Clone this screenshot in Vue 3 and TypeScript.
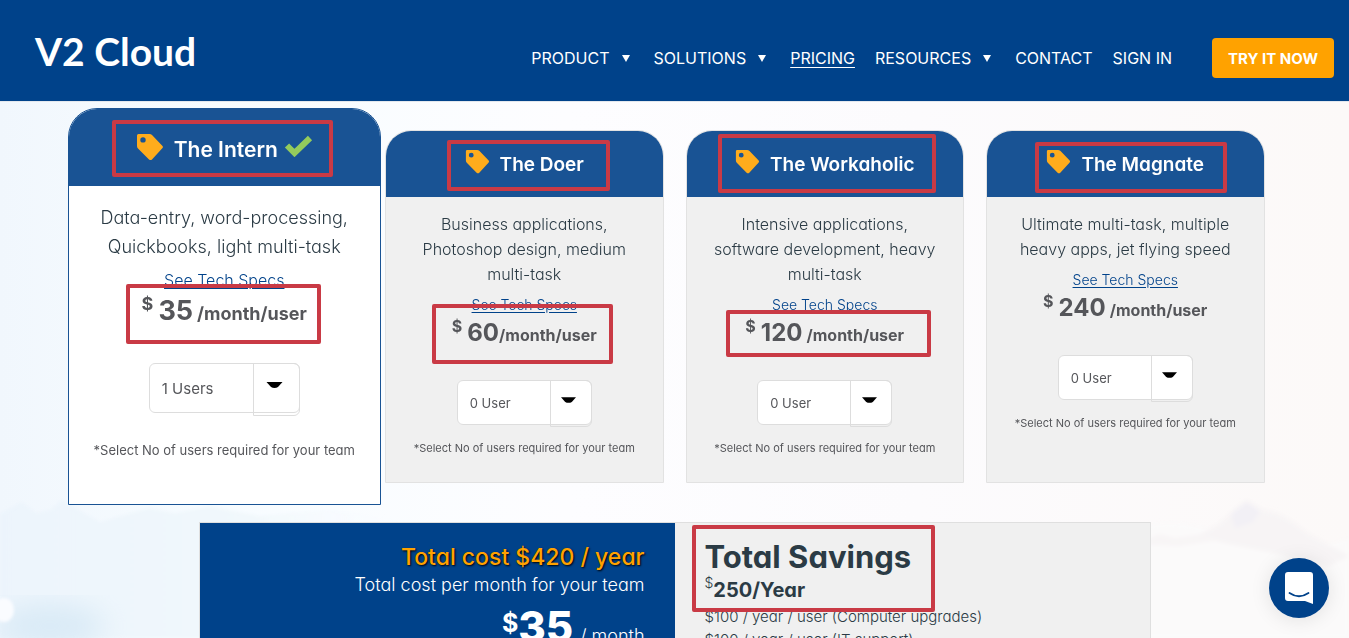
<script setup lang="ts">
import { ref } from 'vue'

interface Plan {
  id: string
  name: string
  description: string
  price: number
  users: string
  featured?: boolean
  markPrice?: boolean
}

const plans = ref<Plan[]>([
  { id: 'intern', name: 'The Intern', description: 'Data-entry, word-processing, Quickbooks, light multi-task', price: 35, users: '1 Users', featured: true, markPrice: true },
  { id: 'doer', name: 'The Doer', description: 'Business applications, Photoshop design, medium multi-task', price: 60, users: '0 User', markPrice: true },
  { id: 'workaholic', name: 'The Workaholic', description: 'Intensive applications, software development, heavy multi-task', price: 120, users: '0 User', markPrice: true },
  { id: 'magnate', name: 'The Magnate', description: 'Ultimate multi-task, multiple heavy apps, jet flying speed', price: 240, users: '0 User' },
])

const links = [
  { label: 'PRODUCT', menu: true },
  { label: 'SOLUTIONS', menu: true },
  { label: 'PRICING', current: true },
  { label: 'RESOURCES', menu: true },
  { label: 'CONTACT' },
  { label: 'SIGN IN' },
]

const userOptions = ['0 User', '1 Users', '2 Users', '3 Users', '4 Users', '5 Users']
</script>

<template>
  <div class="page">
    <svg class="scenery left" viewBox="0 0 420 240" aria-hidden="true">
      <defs>
        <filter id="mist" x="-20%" y="-20%" width="140%" height="140%"><feGaussianBlur stdDeviation="14" /></filter>
        <filter id="soft"><feGaussianBlur stdDeviation="1.500" /></filter>
        <linearGradient id="ridge" x1="0" y1="0" x2="1" y2="0">
          <stop offset="0" stop-color="#ecf4fc" />
          <stop offset="0.6" stop-color="#f1f8fc" />
          <stop offset="1" stop-color="#fbfcff" stop-opacity="0" />
        </linearGradient>
      </defs>
      <path d="M0 116L22 104L36 115L50 112L62 102L80 113L100 124L120 118L150 110L175 115L210 108L260 118L330 112L420 124V240H0Z" fill="url(#ridge)" filter="url(#soft)" />
      <ellipse cx="50" cy="228" rx="55" ry="22" fill="#d9eaf6" filter="url(#mist)" />
      <ellipse cx="4" cy="212" rx="10" ry="12" fill="#fafcff" filter="url(#soft)" />
    </svg>
    <svg class="scenery right" viewBox="0 0 420 240" aria-hidden="true">
      <defs>
        <filter id="haze"><feGaussianBlur stdDeviation="2" /></filter>
      </defs>
      <g filter="url(#haze)">
        <path d="M0 160Q60 130 110 142T200 134T300 138T420 140V240H0Z" fill="#fbfafa" />
        <path d="M268 138L290 126L305 112L318 102L332 111L348 115L364 124L380 136L420 158L400 168L350 156L300 146Z" fill="#f7f4f5" />
        <path d="M302 116L317 104L331 113L324 124L306 130Z" fill="#f2f0f5" />
        <path d="M210 146L230 136L246 140L275 136L290 142L250 148Z" fill="#f8f5f6" />
      </g>
    </svg>

    <header class="topbar">
      <a class="logo" href="#">V2 Cloud</a>
      <nav class="nav" aria-label="Main">
        <a v-for="link in links" :key="link.label" href="#" :class="{ current: link.current }">
          {{ link.label }}
          <svg v-if="link.menu" viewBox="0 0 8 7" aria-hidden="true"><path d="M0 0h8L4 7z" fill="currentColor" /></svg>
        </a>
      </nav>
      <button class="trial" type="button">TRY IT NOW</button>
    </header>

    <main>
      <section class="plans" aria-label="Plans">
        <article v-for="plan in plans" :key="plan.id" class="plan" :class="[plan.id, { featured: plan.featured }]">
          <h2>
            <svg class="tag" viewBox="0 0 28 28" aria-hidden="true">
              <path fill-rule="evenodd" d="M2.500 1H13.500Q15 1 16 2L26.500 13Q27.500 14 26.500 15L16 26.500Q14.500 27.700 13 26.500L2 15.500Q1 14.500 1 13V2.500Q1 1 2.500 1ZM7 4.200A2.700 2.700 0 1 0 7 9.600A2.700 2.700 0 1 0 7 4.200Z" fill="#ffac1c" />
            </svg>
            <span>{{ plan.name }}</span>
            <svg v-if="plan.featured" class="check" viewBox="0 0 29 22" aria-hidden="true">
              <path d="M3 10.500L10.500 18L26 3" fill="none" stroke="#94cb5c" stroke-width="6" stroke-linejoin="miter" />
            </svg>
          </h2>
          <div class="body">
            <p class="description">{{ plan.description }}</p>
            <a class="specs" href="#">See Tech Specs</a>
            <p class="price"><sup>$</sup><strong>{{ plan.price }}</strong><span>/month/user</span></p>
            <div class="picker">
              <select :id="'users-' + plan.id" v-model="plan.users">
                <option v-for="option in userOptions" :key="option">{{ option }}</option>
              </select>
              <span class="arrow" aria-hidden="true">
                <svg viewBox="0 0 16 6"><path d="M0 0H16L11.500 5Q10 6 8 6Q6 6 4.500 5Z" /></svg>
              </span>
            </div>
            <label class="note" :for="'users-' + plan.id">*Select No of users required for your team</label>
          </div>
          <i class="mark mark-title"></i>
          <i v-if="plan.markPrice" class="mark mark-price"></i>
        </article>
      </section>

      <section class="totals" aria-label="Totals">
        <div class="cost">
          <h3>Total cost $420 / year</h3>
          <p>Total cost per month for your team</p>
          <p class="monthly"><sup>$</sup><strong>35</strong><span>/ month</span></p>
        </div>
        <div class="savings">
          <h3>Total Savings</h3>
          <p class="yearly"><sup>$</sup><strong>250/Year</strong></p>
          <p>$100 / year / user (Computer upgrades)</p>
          <p>$100 / year / user (IT support)</p>
          <i class="mark mark-savings"></i>
        </div>
      </section>
    </main>

    <button class="chat" type="button" aria-label="Open chat">
      <svg viewBox="0 0 28 32" aria-hidden="true">
        <path d="M3 0H25Q28 0 28 3V32L20 29H3Q0 29 0 26V3Q0 0 3 0Z" fill="#fff" />
        <path d="M4.500 21Q14 27.500 23.500 21" fill="none" stroke="#00428a" stroke-width="1.800" stroke-linecap="round" />
      </svg>
    </button>
  </div>
</template>

<style>
body {
  margin: 0;
}
</style>

<style scoped>
.page {
  position: relative;
  height: 100vh;
  overflow-y: auto;
  scrollbar-width: none;
  font-family: Inter, "Open Sans", sans-serif;
  font-feature-settings: "cv11";
  color: #2b3b45;
  background: linear-gradient(90deg, #f1f7fd 0%, #f7fcff 16%, #fdfdff 42%, #fcfbfd 68%, #fcf9f8 100%);
}

.page * {
  box-sizing: border-box;
}

h2,
h3,
p {
  margin: 0;
}

.scenery {
  position: fixed;
  bottom: 0;
  width: 420px;
  height: 240px;
}

.scenery.left {
  left: 0;
}

.scenery.right {
  right: 0;
}

.topbar {
  position: sticky;
  top: 0;
  z-index: 2;
  display: flex;
  align-items: center;
  height: 102px;
  padding: 0 15px 0 35px;
  background: #00428a;
  border-bottom: 1px solid #e3e8ee;
}

.logo {
  margin-right: auto;
  color: #fff;
  font-family: Lato, sans-serif;
  font-size: 39px;
  font-weight: 700;
  line-height: 40px;
  text-decoration: none;
}

.nav {
  display: flex;
  gap: 20px;
  margin: 15px 40px 0 0;
}

.nav a {
  display: flex;
  align-items: center;
  gap: 12px;
  color: #fff;
  font-size: 16px;
  line-height: 24px;
  text-decoration: none;
}

.nav a.current {
  text-decoration: underline;
  text-underline-offset: 3px;
}

.nav svg {
  width: 8px;
  height: 7px;
  margin-right: 4px;
}

.trial {
  width: 122px;
  height: 40px;
  margin-top: 15px;
  padding: 0;
  border: 0;
  border-radius: 4px;
  background: #ffa200;
  color: #fff;
  font: 700 15px Inter, sans-serif;
}

main {
  position: relative;
  padding: 6px 20px 40px;
}

.plans {
  display: grid;
  grid-template-columns: repeat(4, minmax(0, 1fr));
  gap: 22px;
  align-items: center;
  max-width: 1180px;
  margin: 0 auto;
}

.plan {
  position: relative;
  height: 353px;
  border: 1px solid #e2e2e2;
  border-radius: 26px 26px 0 0;
  background: #f0f0f0;
  text-align: center;
}

.plan h2 {
  display: flex;
  align-items: center;
  justify-content: center;
  gap: 10px;
  height: 66px;
  border-radius: 25px 25px 0 0;
  background: #195394;
  color: #fff;
  font-size: 19px;
  font-weight: 600;
}

.tag {
  width: 25px;
  height: 25px;
  margin-bottom: 5px;
}

.check {
  width: 29px;
  height: 22px;
  margin: 0 0 6px -4px;
}

.body {
  display: flex;
  flex-direction: column;
  align-items: center;
  padding: 15px 25px 0;
}

.description {
  font-size: 16px;
  font-weight: 300;
  line-height: 25px;
}

.specs {
  margin-top: 5px;
  color: #00428a;
  font-size: 14px;
  font-weight: 300;
  line-height: 25px;
  text-underline-offset: 2px;
}

.price {
  display: flex;
  align-items: baseline;
  color: #55565a;
  font-weight: 700;
  line-height: 32px;
}

.price sup {
  align-self: flex-start;
  margin-right: 5px;
  font-size: 16px;
  line-height: 18px;
}

.price strong {
  margin-right: 4px;
  font-size: 24px;
  font-weight: 700;
}

.price span {
  font-size: 16px;
}

.doer .price strong {
  margin-right: 0;
}

.picker {
  position: relative;
  width: 135px;
  height: 45px;
  margin-top: 29px;
}

.picker select {
  width: 100%;
  height: 100%;
  padding: 0 12px;
  appearance: none;
  border: 1px solid #ddd;
  border-radius: 6px;
  background: #fff;
  color: #55565a;
  font: 400 13px Inter, sans-serif;
}

.arrow {
  position: absolute;
  top: 0;
  right: 0;
  display: flex;
  justify-content: center;
  width: 42px;
  height: 47px;
  padding-top: 16px;
  border: 1px solid #ddd;
  border-radius: 0 6px 6px 0;
  pointer-events: none;
}

.arrow svg {
  width: 15px;
  height: 6px;
  margin-right: 4px;
}

.note {
  margin-top: 13px;
  color: #55565a;
  font-size: 11px;
  line-height: 20px;
  white-space: nowrap;
}

.featured {
  height: 397px;
  margin: 0 -18px 0 -17px;
  border-color: #195394;
  border-radius: 29px 29px 0 0;
  background: #fff;
}

.featured h2 {
  height: 77px;
  padding-top: 3px;
  border-radius: 28px 28px 0 0;
  font-size: 21px;
}

.featured .tag {
  width: 28px;
  height: 28px;
}

.featured .body {
  padding-top: 17px;
}

.featured .description {
  font-size: 18px;
  line-height: 29px;
}

.featured .specs {
  font-size: 16px;
  line-height: 29px;
}

.featured .price sup {
  font-size: 18px;
}

.featured .price strong {
  font-size: 27px;
}

.featured .price span {
  font-size: 18px;
}

.featured .picker {
  width: 151px;
  height: 50px;
  margin-top: 33px;
}

.featured .picker select {
  font-size: 15px;
}

.featured .arrow {
  width: 47px;
  height: 53px;
  padding-top: 18px;
}

.featured .arrow svg {
  width: 17px;
}

.featured .note {
  margin-top: 27px;
  font-size: 13px;
}

.mark {
  position: absolute;
  border: 4px solid #c93a45;
  border-radius: 2px;
  pointer-events: none;
}

.intern .mark-title {
  inset: 11px 47px auto 43px;
  height: 57px;
}

.intern .mark-price {
  inset: 175px 59px auto 57px;
  height: 60px;
}

.doer .mark-title {
  inset: 9px 53px auto 61px;
  height: 51px;
}

.doer .mark-price {
  inset: 173px 50px auto 46px;
  height: 60px;
}

.workaholic .mark-title {
  inset: 3px 27px auto 31px;
  height: 59px;
}

.workaholic .mark-price {
  inset: 179px 32px auto 39px;
  height: 47px;
}

.magnate .mark-title {
  inset: 11px 37px auto 48px;
  height: 51px;
}

.totals {
  display: grid;
  grid-template-columns: 1fr 1fr;
  max-width: 952px;
  min-height: 220px;
  margin: 17px auto 0;
  border: 1px solid #dfdfdf;
  background: #f0f0f0;
}

.cost {
  padding: 18px 30px;
  background: #00428a;
  color: #fff;
  text-align: right;
}

.cost h3 {
  color: #ffa200;
  font-size: 23px;
  font-weight: 500;
  line-height: 32px;
  text-shadow: 1px 1px 2px #000;
}

.cost p {
  font-size: 18px;
  font-weight: 300;
  line-height: 24px;
}

.cost .monthly {
  display: flex;
  align-items: baseline;
  justify-content: flex-end;
  margin-top: 5px;
  line-height: 50px;
}

.monthly sup {
  align-self: flex-start;
  font-size: 25px;
  font-weight: 700;
  line-height: 42px;
}

.monthly strong {
  margin-right: 7px;
  font-size: 42px;
  font-weight: 800;
}

.savings {
  position: relative;
  padding: 15px 30px;
}

.savings h3 {
  font-size: 31px;
  font-weight: 700;
  line-height: 38px;
}

.savings p {
  font-size: 15px;
  font-weight: 300;
  line-height: 23px;
}

.savings .yearly {
  display: flex;
  height: 29px;
}

.yearly sup {
  font-size: 14px;
  line-height: 14px;
}

.yearly strong {
  font-size: 20px;
  font-weight: 700;
  line-height: 28px;
}

.mark-savings {
  top: 2px;
  left: 17px;
  width: 243px;
  height: 87px;
}

.chat {
  position: fixed;
  right: 20px;
  bottom: 20px;
  z-index: 3;
  display: grid;
  place-items: center;
  width: 60px;
  height: 60px;
  padding: 0;
  border: 0;
  border-radius: 50%;
  background: #00428a;
  box-shadow: 0 2px 20px rgba(0, 0, 0, 0.1);
}

.chat svg {
  width: 28px;
  height: 32px;
}
</style>
